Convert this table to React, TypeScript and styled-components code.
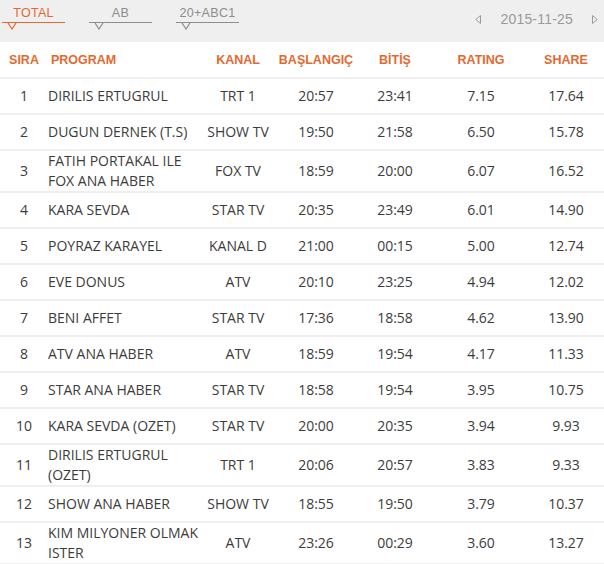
import React from "react";
import styled, { createGlobalStyle } from "styled-components";

const GlobalStyle = createGlobalStyle`
  html, body { margin: 0; padding: 0; background: #efefef; }
  body { font-family: "Open Sans", "Liberation Sans", sans-serif; }
`;

const ORANGE = "#e3692f";

const Page = styled.div`
  width: 604px;
  background: #efefef;
`;

const TopBar = styled.div`
  height: 42px;
  display: flex;
  align-items: flex-start;
  justify-content: space-between;
  padding: 0 6px 0 2px;
  box-sizing: border-box;
`;

const Tabs = styled.div`
  display: flex;
  gap: 24px;
  padding-top: 5px;
`;

const Tab = styled.div<{ $active?: boolean }>`
  width: 63px;
  display: flex;
  flex-direction: column;
  color: ${(p) => (p.$active ? ORANGE : "#8d8d8d")};
`;

const TabLabel = styled.div`
  font-family: "Liberation Sans", Arial, sans-serif;
  font-size: 12.5px;
  letter-spacing: 0.3px;
  line-height: 16px;
  text-align: center;
  height: 17px;
  border-bottom: 1px solid currentColor;
`;

const Chevron = styled.svg`
  margin-left: 5px;
  display: block;
`;

const DateNav = styled.div`
  display: flex;
  align-items: center;
  gap: 19px;
  padding-top: 11px;
  color: #9a9a9a;
  font-family: "Liberation Sans", Arial, sans-serif;
  font-size: 14px;
  letter-spacing: 0.2px;
`;

const Table = styled.div`
  display: flex;
  flex-direction: column;
  gap: 2px;
`;

const Row = styled.div<{ $header?: boolean; $tall?: boolean }>`
  display: grid;
  grid-template-columns: 48px 152px 76px 80px 78px 94px 76px;
  align-items: center;
  background: #ffffff;
  height: ${(p) => (p.$header ? "35px" : p.$tall ? "40px" : "34px")};
  color: ${(p) => (p.$header ? ORANGE : "#3c3c3c")};
  font-family: ${(p) =>
    p.$header ? '"Liberation Sans", Arial, sans-serif' : '"Open Sans", sans-serif'};
  font-weight: ${(p) => (p.$header ? 700 : 400)};
  font-size: ${(p) => (p.$header ? "12.5px" : "14px")};
`;

const Cell = styled.div<{ $align?: "left" | "center"; $pad?: number }>`
  text-align: ${(p) => p.$align ?? "center"};
  padding-left: ${(p) => p.$pad ?? 0}px;
  white-space: nowrap;
  line-height: 20px;
`;

type Item = {
  n: number;
  name: string[];
  ch: string;
  start: string;
  end: string;
  rating: string;
  share: string;
};

const data: Item[] = [
  { n: 1, name: ["DIRILIS ERTUGRUL"], ch: "TRT 1", start: "20:57", end: "23:41", rating: "7.15", share: "17.64" },
  { n: 2, name: ["DUGUN DERNEK (T.S)"], ch: "SHOW TV", start: "19:50", end: "21:58", rating: "6.50", share: "15.78" },
  { n: 3, name: ["FATIH PORTAKAL ILE", "FOX ANA HABER"], ch: "FOX TV", start: "18:59", end: "20:00", rating: "6.07", share: "16.52" },
  { n: 4, name: ["KARA SEVDA"], ch: "STAR TV", start: "20:35", end: "23:49", rating: "6.01", share: "14.90" },
  { n: 5, name: ["POYRAZ KARAYEL"], ch: "KANAL D", start: "21:00", end: "00:15", rating: "5.00", share: "12.74" },
  { n: 6, name: ["EVE DONUS"], ch: "ATV", start: "20:10", end: "23:25", rating: "4.94", share: "12.02" },
  { n: 7, name: ["BENI AFFET"], ch: "STAR TV", start: "17:36", end: "18:58", rating: "4.62", share: "13.90" },
  { n: 8, name: ["ATV ANA HABER"], ch: "ATV", start: "18:59", end: "19:54", rating: "4.17", share: "11.33" },
  { n: 9, name: ["STAR ANA HABER"], ch: "STAR TV", start: "18:58", end: "19:54", rating: "3.95", share: "10.75" },
  { n: 10, name: ["KARA SEVDA (OZET)"], ch: "STAR TV", start: "20:00", end: "20:35", rating: "3.94", share: "9.93" },
  { n: 11, name: ["DIRILIS ERTUGRUL", "(OZET)"], ch: "TRT 1", start: "20:06", end: "20:57", rating: "3.83", share: "9.33" },
  { n: 12, name: ["SHOW ANA HABER"], ch: "SHOW TV", start: "18:55", end: "19:50", rating: "3.79", share: "10.37" },
  { n: 13, name: ["KIM MILYONER OLMAK", "ISTER"], ch: "ATV", start: "23:26", end: "00:29", rating: "3.60", share: "13.27" },
];

const TabItem = ({ label, active }: { label: string; active?: boolean }) => (
  <Tab $active={active}>
    <TabLabel>{label}</TabLabel>
    <Chevron width="10" height="7" viewBox="0 0 10 7">
      <polyline points="1,0 5,6 9,0" fill="none" stroke="currentColor" strokeWidth="1.2" />
    </Chevron>
  </Tab>
);

const Arrow = ({ dir }: { dir: "left" | "right" }) => (
  <svg width="6" height="9" viewBox="0 0 6 9">
    <polygon
      points={dir === "left" ? "5.5,0.5 0.8,4.5 5.5,8.5" : "0.5,0.5 5.2,4.5 0.5,8.5"}
      fill="none"
      stroke="#9a9a9a"
      strokeWidth="1"
    />
  </svg>
);

export default function App() {
  return (
    <Page>
      <GlobalStyle />
      <TopBar>
        <Tabs>
          <TabItem label="TOTAL" active />
          <TabItem label="AB" />
          <TabItem label="20+ABC1" />
        </Tabs>
        <DateNav>
          <Arrow dir="left" />
          <span>2015-11-25</span>
          <Arrow dir="right" />
        </DateNav>
      </TopBar>
      <Table>
        <Row $header>
          <Cell>SIRA</Cell>
          <Cell $align="left" $pad={3}>PROGRAM</Cell>
          <Cell>KANAL</Cell>
          <Cell>BAŞLANGIÇ</Cell>
          <Cell>BİTİŞ</Cell>
          <Cell>RATING</Cell>
          <Cell>SHARE</Cell>
        </Row>
        {data.map((d) => (
          <Row key={d.n} $tall={d.name.length > 1}>
            <Cell>{d.n}</Cell>
            <Cell $align="left">
              {d.name.map((l, i) => (
                <div key={i}>{l}</div>
              ))}
            </Cell>
            <Cell>{d.ch}</Cell>
            <Cell>{d.start}</Cell>
            <Cell>{d.end}</Cell>
            <Cell>{d.rating}</Cell>
            <Cell>{d.share}</Cell>
          </Row>
        ))}
      </Table>
    </Page>
  );
}
